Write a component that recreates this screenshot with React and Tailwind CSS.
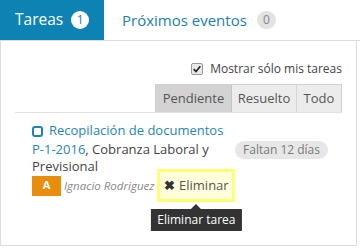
import React from 'react';

function CheckIcon() {
    return (
        <span className="w-[12px] h-[12px] rounded-[2px] border border-[#999] bg-[#e9e9e9] flex items-center justify-center">
            <svg viewBox="0 0 12 12" className="w-[10px] h-[10px]">
                <path d="M2 6.2 L4.8 9 L10 2.8" fill="none" stroke="#222" strokeWidth="2" />
            </svg>
        </span>
    );
}

export default function App() {
    return (
        <div className="w-[360px] h-[248px] bg-white overflow-hidden" style={{ fontFamily: '"Open Sans", sans-serif' }}>
            {/* tabs */}
            <div className="flex h-[41px] border-b border-[#dcdcdc]">
                <div className="w-[104px] h-[40px] bg-[#0f82b4] flex items-center pl-[15px] gap-[8px]">
                    <span className="text-white text-[15.5px]">Tareas</span>
                    <span className="w-[18px] h-[18px] rounded-full bg-white text-[#0f82b4] text-[12px] flex items-center justify-center">1</span>
                </div>
                <div className="flex items-center pl-[18px] gap-[10px]">
                    <span className="text-[#1b7fab] text-[15px]">Próximos eventos</span>
                    <span className="w-[19px] h-[18px] rounded-full bg-[#e3e3e3] text-[#888] text-[12px] flex items-center justify-center">0</span>
                </div>
            </div>

            {/* panel */}
            <div className="w-[357px] h-[205px] border-l border-r border-b border-[#dcdcdc] px-[14px]">
                <div className="flex justify-end items-center gap-[7px] pt-[19px]">
                    <CheckIcon />
                    <span className="text-[12px] text-[#444]">Mostrar sólo mis tareas</span>
                </div>
                <div className="flex justify-end border-b border-[#e2e2e2] mt-[6px]">
                    <div className="flex text-[13px] text-[#555] h-[28px] border border-[#d0d0d0] border-b-0">
                        <span className="w-[76px] flex items-center justify-center bg-[#d3d3d3] border-r border-[#c4c4c4]">Pendiente</span>
                        <span className="w-[65px] flex items-center justify-center bg-[#ececec] border-r border-[#d6d6d6]">Resuelto</span>
                        <span className="w-[44px] flex items-center justify-center bg-[#ececec]">Todo</span>
                    </div>
                </div>

                {/* task */}
                <div className="pl-[17px] pt-[9px]">
                    <div className="flex items-center gap-[6px] h-[18px]">
                        <span className="w-[11px] h-[11px] border-2 border-[#1f84b3] rounded-[3px]"></span>
                        <span className="text-[13px] text-[#2686b4]">Recopilación de documentos</span>
                    </div>
                    <div className="flex justify-between items-start mt-[1px]">
                        <div className="text-[13px] leading-[17px] text-[#444] w-[200px]">
                            <span className="text-[#2686b4]">P-1-2016</span>, Cobranza Laboral y Previsional
                        </div>
                        <span className="mt-[0px] mr-[14px] h-[18px] px-[8px] rounded-full bg-[#e7e7e7] text-[#7a7a7a] text-[12px] flex items-center">Faltan 12 días</span>
                    </div>
                    <div className="flex items-center mt-[-6px]">
                        <span className="w-[29px] h-[20px] bg-[#e88e0c] text-white text-[11px] font-bold flex items-center justify-center">A</span>
                        <span className="ml-[3px] text-[11.5px] italic text-[#888]">Ignacio Rodriguez</span>
                        <div className="ml-[3px] relative">
                            <span className="h-[33px] w-[78px] border-[3px] border-[#ffff73] bg-[#ffffdc] flex items-center justify-center gap-[4px] text-[13px] text-[#555]">
                                <span className="text-[#333] text-[13px] font-bold">✖</span>Eliminar
                            </span>
                            <div className="absolute left-1/2 -translate-x-1/2 top-[35px] flex flex-col items-center">
                                <span className="w-0 h-0 border-l-[5px] border-r-[5px] border-b-[5px] border-l-transparent border-r-transparent border-b-[#333]"></span>
                                <span className="bg-[#333] text-white text-[12px] whitespace-nowrap px-[6px] h-[22px] flex items-center">Eliminar tarea</span>
                            </div>
                        </div>
                    </div>
                </div>
            </div>
        </div>
    );
}
